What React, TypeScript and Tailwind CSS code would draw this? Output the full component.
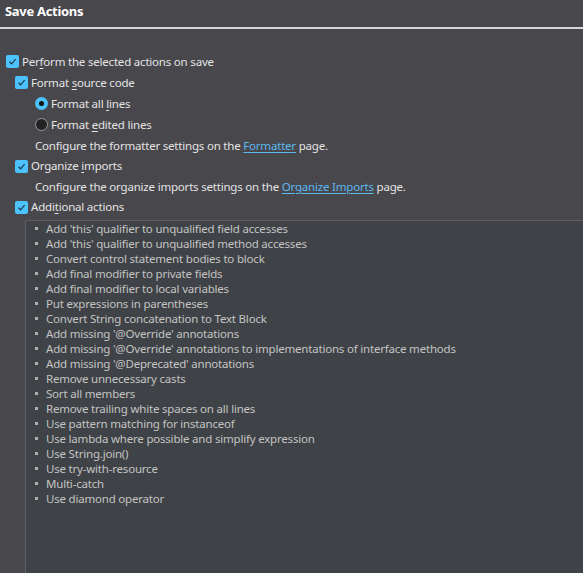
import React from 'react';

const additionalActions = [
  "Add 'this' qualifier to unqualified field accesses",
  "Add 'this' qualifier to unqualified method accesses",
  'Convert control statement bodies to block',
  'Add final modifier to private fields',
  'Add final modifier to local variables',
  'Put expressions in parentheses',
  'Convert String concatenation to Text Block',
  "Add missing '@Override' annotations",
  "Add missing '@Override' annotations to implementations of interface methods",
  "Add missing '@Deprecated' annotations",
  'Remove unnecessary casts',
  'Sort all members',
  'Remove trailing white spaces on all lines',
  'Use pattern matching for instanceof',
  'Use lambda where possible and simplify expression',
  'Use String.join()',
  'Use try-with-resource',
  'Multi-catch',
  'Use diamond operator',
];

// caixa de seleção marcada
const Checkbox = () => (
  <span className="w-[13px] h-[13px] rounded-[2px] bg-[#4cc2ff] flex items-center justify-center shrink-0">
    <svg width="9" height="9" viewBox="0 0 9 9">
      <path d="M1.5 4.8 L3.6 6.8 L7.6 2.2" fill="none" stroke="#1d3a4a" strokeWidth="1.2" />
    </svg>
  </span>
);

const Radio = ({ checked }: { checked: boolean }) =>
  checked ? (
    <span className="w-[13px] h-[13px] rounded-full bg-[#4cc2ff] flex items-center justify-center shrink-0">
      <span className="w-[5px] h-[5px] rounded-full bg-[#111]" />
    </span>
  ) : (
    <span className="w-[13px] h-[13px] rounded-full bg-[#232323] border border-[#9a9a9a] shrink-0" />
  );

// texto com letra mnemônica sublinhada
const Label = ({ pre, u, post }: { pre: string; u: string; post: string }) => (
  <span>
    {pre}
    <span className="underline underline-offset-2">{u}</span>
    {post}
  </span>
);

const Link = ({ children }: { children: React.ReactNode }) => (
  <span className="text-[#5cb8ee] underline underline-offset-2">{children}</span>
);

export default function App() {
  return (
    <div
      className="w-[583px] h-[573px] bg-[#48474c] text-[#e4e4e4] text-[11.5px] tracking-[-0.2px] flex flex-col overflow-hidden"
      style={{ fontFamily: '"Noto Sans", "Open Sans", sans-serif' }}
    >
      <div className="h-[27px] flex items-center pb-[4px] px-[5px] font-bold text-[13px] tracking-[-0.3px] text-white">
        Save Actions
      </div>
      <div className="h-[2px] bg-[#d6d6d6]" />

      <div className="pt-[22px] flex flex-col">
        <div className="h-[21px] flex items-center gap-[3px] pl-[6px]">
          <Checkbox />
          <Label pre="Per" u="f" post="orm the selected actions on save" />
        </div>
        <div className="h-[21px] flex items-center gap-[3px] pl-[15px]">
          <Checkbox />
          <Label pre="Format " u="s" post="ource code" />
        </div>
        <div className="h-[21px] flex items-center gap-[3px] pl-[35px]">
          <Radio checked />
          <Label pre="Format all " u="l" post="ines" />
        </div>
        <div className="h-[21px] flex items-center gap-[3px] pl-[35px]">
          <Radio checked={false} />
          <Label pre="Format " u="e" post="dited lines" />
        </div>
        <div className="h-[21px] flex items-center pl-[35px]">
          <span>
            Configure the formatter settings on the <Link>Formatter</Link> page.
          </span>
        </div>
        <div className="h-[20px] flex items-center gap-[3px] pl-[15px]">
          <Checkbox />
          <Label pre="Organize " u="i" post="mports" />
        </div>
        <div className="h-[21px] flex items-center pl-[35px]">
          <span>
            Configure the organize imports settings on the <Link>Organize Imports</Link> page.
          </span>
        </div>
        <div className="h-[20px] flex items-center gap-[3px] pl-[15px]">
          <Checkbox />
          <Label pre="Addi" u="t" post="ional actions" />
        </div>
      </div>

      <div className="ml-[25px] mt-[3px] flex-1 bg-[#3f4246] border-t border-l border-[#5f5f62] text-[#c4c4c4]">
        {additionalActions.map((a) => (
          <div key={a} className="h-[15px] leading-[15px] flex items-center">
            <span className="w-[20px] flex justify-center">
              <span className="w-[3px] h-[3px] bg-[#b0b0b0]" />
            </span>
            <span>{a}</span>
          </div>
        ))}
      </div>
    </div>
  );
}
